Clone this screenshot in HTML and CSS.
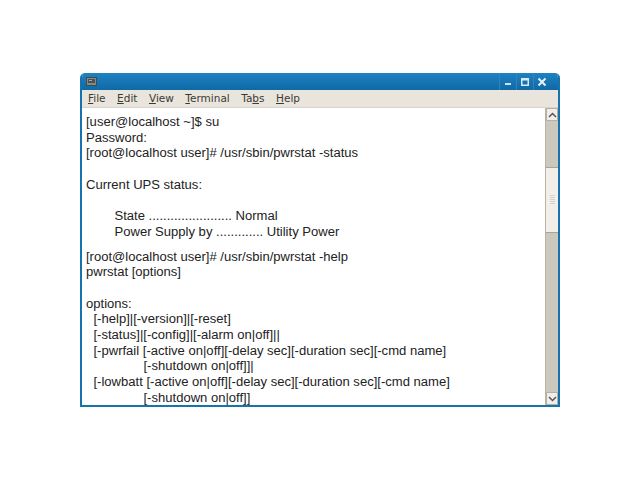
FILE: index.html
```html
<!DOCTYPE html>
<html lang="en">
<head>
<meta charset="utf-8">
<title>Terminal</title>
<link rel="stylesheet" href="styles.css">
</head>
<body>
<div class="window">
  <div class="titlebar">
    <svg class="term-icon" width="11" height="9" viewBox="0 0 11 9"><rect x="0.5" y="0.5" width="10" height="8" fill="#858a84" stroke="#3f4c4c"/><rect x="2" y="2" width="7" height="4" fill="#4a5352"/><rect x="3" y="3" width="3" height="1" fill="#a8aca6"/></svg>
    <div class="controls">
      <div class="ctl"><svg width="10" height="10" viewBox="0 0 10 10"><rect x="2" y="6" width="6" height="2" fill="#cfe2ee"/></svg></div>
      <div class="ctl"><svg width="10" height="10" viewBox="0 0 10 10"><path d="M1 1h8v8H1z M2.5 3.5v4h5v-4z" fill="#dceaf3" fill-rule="evenodd"/></svg></div>
      <div class="ctl"><svg width="10" height="10" viewBox="0 0 10 10"><path d="M1.5 1.5l7 7M8.5 1.5l-7 7" stroke="#e6f0f6" stroke-width="2" fill="none"/></svg></div>
    </div>
  </div>
  <div class="menubar">
    <span class="menu"><u>F</u>ile</span>
    <span class="menu"><u>E</u>dit</span>
    <span class="menu"><u>V</u>iew</span>
    <span class="menu"><u>T</u>erminal</span>
    <span class="menu">Ta<u>b</u>s</span>
    <span class="menu"><u>H</u>elp</span>
  </div>
  <div class="body">
    <div class="screen">
      <div class="group">
        <div class="line">[user@localhost ~]$ su</div>
        <div class="line">Password:</div>
        <div class="line">[root@localhost user]# /usr/sbin/pwrstat -status</div>
        <div class="line">&nbsp;</div>
        <div class="line">Current UPS status:</div>
        <div class="line">&nbsp;</div>
        <div class="line tab">State ....................... Normal</div>
        <div class="line tab">Power Supply by ............. Utility Power</div>
      </div>
      <div class="group second">
        <div class="line">[root@localhost user]# /usr/sbin/pwrstat -help</div>
        <div class="line">pwrstat [options]</div>
        <div class="line">&nbsp;</div>
        <div class="line">options:</div>
        <div class="line opt">[-help]|[-version]|[-reset]</div>
        <div class="line opt">[-status]|[-config]|[-alarm on|off]||</div>
        <div class="line opt">[-pwrfail [-active on|off][-delay sec][-duration sec][-cmd name]</div>
        <div class="line sub">[-shutdown on|off]]|</div>
        <div class="line opt">[-lowbatt [-active on|off][-delay sec][-duration sec][-cmd name]</div>
        <div class="line sub">[-shutdown on|off]]</div>
      </div>
    </div>
    <div class="scrollbar">
      <div class="arrow"><svg width="9" height="6" viewBox="0 0 9 6"><path d="M1 5l3.5-3.5L8 5" stroke="#555" stroke-width="1.5" fill="none"/></svg></div>
      <div class="track">
        <div class="thumb"><div class="grip"></div></div>
      </div>
      <div class="arrow"><svg width="9" height="6" viewBox="0 0 9 6"><path d="M1 1l3.5 3.5L8 1" stroke="#555" stroke-width="1.5" fill="none"/></svg></div>
    </div>
  </div>
</div>
</body>
</html>
```
FILE: styles.css
```css
html, body { margin: 0; padding: 0; background: #fff; }
body { width: 640px; height: 480px; overflow: hidden; padding-top: 73px; box-sizing: border-box; }
.window {
  width: 480px; height: 334px; margin-left: 80px; box-sizing: border-box;
  border: 2px solid #1673ae; border-top: 0; border-radius: 5px 5px 0 0;
  display: flex; flex-direction: column; background: #fff; overflow: hidden;
}
.titlebar {
  height: 17px; flex: none; background: linear-gradient(#1f82c2, #0f69a6);
  display: flex; align-items: center; justify-content: space-between; padding: 0 8px 0 4px;
}
.term-icon { display: block; }
.controls { display: flex; height: 100%; }
.ctl { display: flex; align-items: center; justify-content: center; border-left: 1px solid #2f84bc; box-sizing: border-box; height: 100%; width: 17px; }
.menubar {
  height: 18px; flex: none; background: #e9e5dd; border-bottom: 1px solid #d8d3c8; box-sizing: border-box;
  display: flex; align-items: center; padding: 0 0 2px 6px; gap: 11.5px;
  font: 10.5px "DejaVu Sans", sans-serif; color: #3a3a38;
}
.body { flex: 1; display: flex; min-height: 0; }
.screen { flex: 1; padding: 6px 0 0 4px; font: 13.05px/15.65px "Liberation Sans", Arial, sans-serif; color: #222; overflow: hidden; white-space: nowrap; }
.second { margin-top: 9.5px; }
.tab { padding-left: 28.5px; }
.opt { padding-left: 7.5px; }
.sub { padding-left: 57.5px; }
.scrollbar { width: 12px; flex: none; display: flex; flex-direction: column; background: #cdc8bd; border-left: 1px solid #b9b4a8; }
.arrow { height: 13px; flex: none; background: #f1eeea; border: 1px solid #b5b0a5; box-sizing: border-box; display: flex; align-items: center; justify-content: center; }
.arrow svg { display: block; }
.track { flex: 1; padding-top: 46px; }
.thumb { height: 64px; background: #f2efeb; border-top: 1px solid #a9a498; border-bottom: 1px solid #a9a498; display: flex; align-items: center; justify-content: center; }
.grip { width: 5px; height: 10px; background: repeating-linear-gradient(#d5d1c9 0 1px, transparent 1px 2px); }
```
